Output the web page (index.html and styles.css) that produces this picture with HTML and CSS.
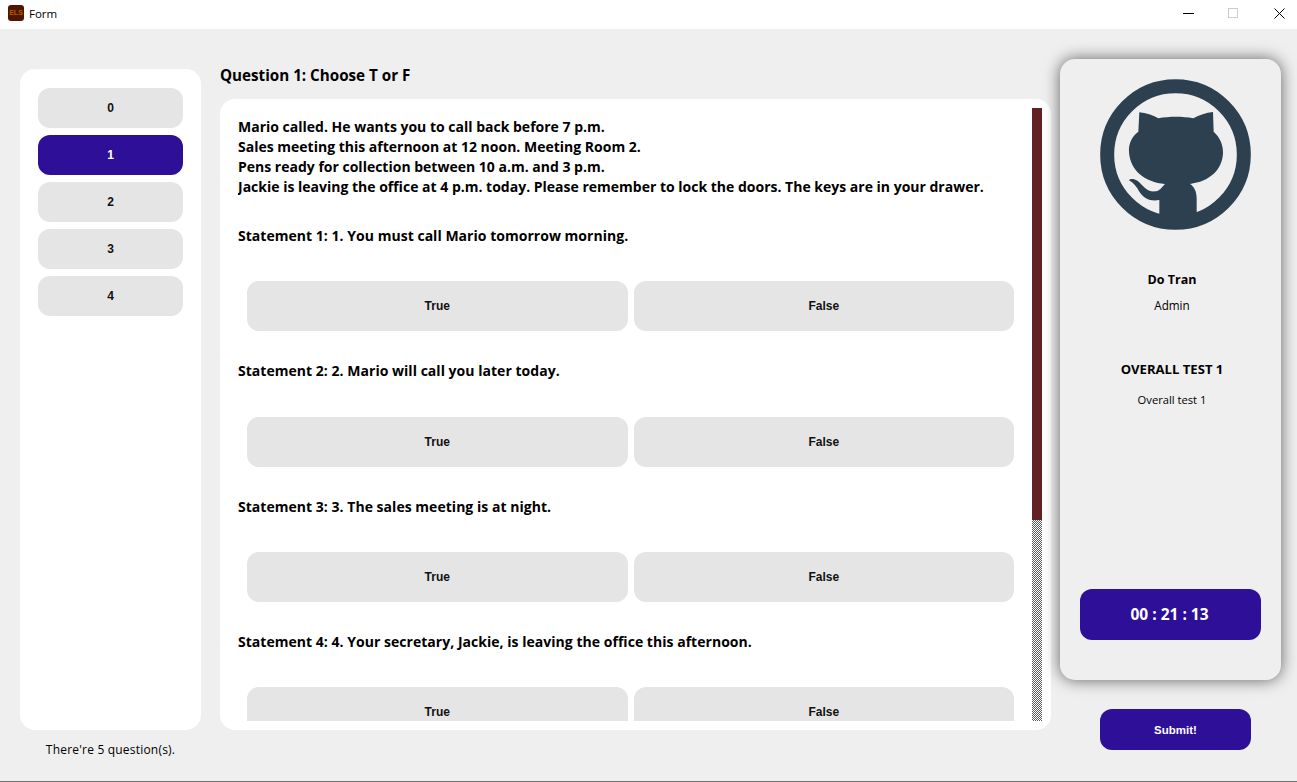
FILE: index.html
```html
<!DOCTYPE html>
<html lang="en">
<head>
<meta charset="utf-8">
<title>Form</title>
<link rel="stylesheet" href="styles.css">
</head>
<body>
<div class="window">
  <header class="titlebar">
    <div class="app-icon">ELS</div>
    <div class="app-title">Form</div>
    <div class="win-controls">
      <svg class="win-min" width="11" height="1" viewBox="0 0 11 1"><rect width="11" height="1" fill="#000"/></svg>
      <svg class="win-max" width="11" height="11" viewBox="0 0 11 11"><rect x=".5" y=".5" width="9" height="9" fill="none" stroke="#ccc"/></svg>
      <svg class="win-close" width="11" height="11" viewBox="0 0 11 11"><path d="M.5.5l10 10M10.500.5l-10 10" stroke="#000" fill="none"/></svg>
    </div>
  </header>
  <main class="content">
    <section class="left">
      <nav class="qlist">
        <button class="qbtn">0</button>
        <button class="qbtn active">1</button>
        <button class="qbtn">2</button>
        <button class="qbtn">3</button>
        <button class="qbtn">4</button>
      </nav>
      <p class="count">There're 5 question(s).</p>
    </section>
    <section class="center">
      <h1 class="qtitle">Question 1: Choose T or F</h1>
      <div class="card">
        <div class="scroll">
          <p class="passage">Mario called. He wants you to call back before 7 p.m.<br>Sales meeting this afternoon at 12 noon. Meeting Room 2.<br>Pens ready for collection between 10 a.m. and 3 p.m.<br>Jackie is leaving the office at 4 p.m. today. Please remember to lock the doors. The keys are in your drawer.</p>
          <div class="stmt">
            <p class="stmt-text">Statement 1: 1. You must call Mario tomorrow morning.</p>
            <div class="answers"><button class="ans">True</button><button class="ans">False</button></div>
          </div>
          <div class="stmt">
            <p class="stmt-text">Statement 2: 2. Mario will call you later today.</p>
            <div class="answers"><button class="ans">True</button><button class="ans">False</button></div>
          </div>
          <div class="stmt">
            <p class="stmt-text">Statement 3: 3. The sales meeting is at night.</p>
            <div class="answers"><button class="ans">True</button><button class="ans">False</button></div>
          </div>
          <div class="stmt">
            <p class="stmt-text">Statement 4: 4. Your secretary, Jackie, is leaving the office this afternoon.</p>
            <div class="answers"><button class="ans">True</button><button class="ans">False</button></div>
          </div>
        </div>
        <div class="scrollbar"><div class="thumb"></div></div>
      </div>
    </section>
    <aside class="right">
      <div class="profile">
        <svg class="avatar" width="151" height="151" viewBox="150 237 453 453">
          <circle cx="376.500" cy="463.500" r="205" fill="none" stroke="#2c4050" stroke-width="42"/>
          <path fill="#2c4050" d="M268 337C288 338 308 346 325 355C358 349 398 349 430 355C448 346 468 337 489 336L491 395C510 412 520 435 519 460C517 510 478 545 420 552C433 560 440 575 440 595L440 660L376 688L328 660L328 600C300 605 282 595 268 575C260 560 250 548 237 541C240 535 252 536 262 542C280 555 290 578 318 574C330 572 335 562 345 552C285 546 240 512 237 455C235 430 247 408 265 395Z"/>
        </svg>
        <div class="name">Do Tran</div>
        <div class="role">Admin</div>
        <div class="test-title">OVERALL TEST 1</div>
        <div class="test-sub">Overall test 1</div>
        <div class="timer">00 : 21 : 13</div>
      </div>
      <button class="submit">Submit!</button>
    </aside>
  </main>
</div>
</body>
</html>
```

FILE: styles.css
```css
* { box-sizing: border-box; }
html, body { margin: 0; padding: 0; height: 100%; }
body { background: #efefef; color: #000; font-family: "Open Sans", "Noto Sans", sans-serif; overflow: hidden; }
p, h1 { margin: 0; }
button { border: 0; font-family: "Liberation Sans", Arial, sans-serif; font-weight: 700; font-size: 12px; color: #111; padding: 0; }

.window { height: 782px; border-bottom: 1px solid #6e6e6e; display: flex; flex-direction: column; }

.titlebar { height: 29px; background: #fff; display: flex; align-items: center; padding-left: 8px; flex: none; }
.app-icon { width: 16px; height: 16px; border-radius: 3px; background: #4e1600; color: #b45a00; font: 700 7px/16px "Liberation Sans", sans-serif; text-align: center; margin-top: -3px; }
.app-title { font-size: 11.500px; margin-left: 5px; margin-top: -3px; }
.win-controls { margin-left: auto; display: flex; align-items: center; padding-right: 12px; height: 100%; margin-top: -3px; }
.win-min { margin-right: 34px; }
.win-max { margin-right: 35px; }

.content { flex: 1; display: flex; position: relative; }

.left { width: 181px; margin-left: 20px; padding-top: 40px; display: flex; flex-direction: column; flex: none; }
.qlist { height: 661px; background: #fff; border-radius: 15px; padding: 19px 18px; display: flex; flex-direction: column; gap: 7px; }
.qbtn { height: 40px; background: #e5e5e5; border-radius: 12px; flex: none; }
.qbtn.active { background: #2e1098; color: #fff; }
.count { font-size: 12px; line-height: 16px; text-align: center; margin-top: 12px; letter-spacing: .2px; }

.center { width: 831px; margin-left: 19px; padding-top: 37px; flex: none; }
.qtitle { font-size: 15.200px; font-weight: 700; line-height: 18px; height: 33px; }
.card { height: 631px; background: #fff; border-radius: 15px; padding: 9px 9px 9px 18px; display: flex; }
.scroll { flex: 1; min-width: 0; overflow: hidden; }
.passage { font-size: 14px; font-weight: 700; line-height: 20px; padding-top: 9px; }
.stmt { height: 135.330px; padding-top: 19px; }
.stmt-text { font-size: 14px; font-weight: 700; line-height: 20px; letter-spacing: .03px; margin-top: 10px; }
.answers { display: flex; gap: 6px; padding: 0 18px 0 9px; margin-top: 35.300px; }
.ans { height: 50px; flex: 1; background: #e5e5e5; border-radius: 12px; }

.scrollbar { width: 10px; flex: none; background-color: #fff; background-image: repeating-conic-gradient(#5a5a5a 0 25%, #fff 0 50%); background-size: 2px 2px; }
.thumb { height: 412px; background: #612024; }

.right { width: 221px; margin-left: 9px; padding-top: 30px; flex: none; display: flex; flex-direction: column; align-items: center; }
.profile { width: 221px; height: 621px; background: #efefef; border-radius: 15px; box-shadow: 0 0 16px rgba(0,0,0,.6); display: flex; flex-direction: column; align-items: center; padding-top: 20px; }
.avatar { flex: none; margin-left: 10px; }
.name, .role, .test-title, .test-sub { padding-left: 3px; }
.name { font-size: 12.500px; font-weight: 700; line-height: 18px; margin-top: 41px; }
.role { font-size: 11.700px; line-height: 16px; margin-top: 8px; }
.test-title { font-size: 13.100px; font-weight: 700; line-height: 18px; margin-top: 47px; }
.test-sub { font-size: 11.200px; line-height: 16px; margin-top: 14px; }
.timer { width: 181px; height: 51px; background: #2e1098; color: #fff; border-radius: 12px; font-size: 15.500px; font-weight: 700; line-height: 51px; text-align: center; padding-right: 2px; margin-top: 181px; }
.submit { width: 151px; height: 41px; background: #2e1098; color: #fff; border-radius: 12px; margin-top: 29px; margin-left: 10px; font-size: 11.500px; }
```
